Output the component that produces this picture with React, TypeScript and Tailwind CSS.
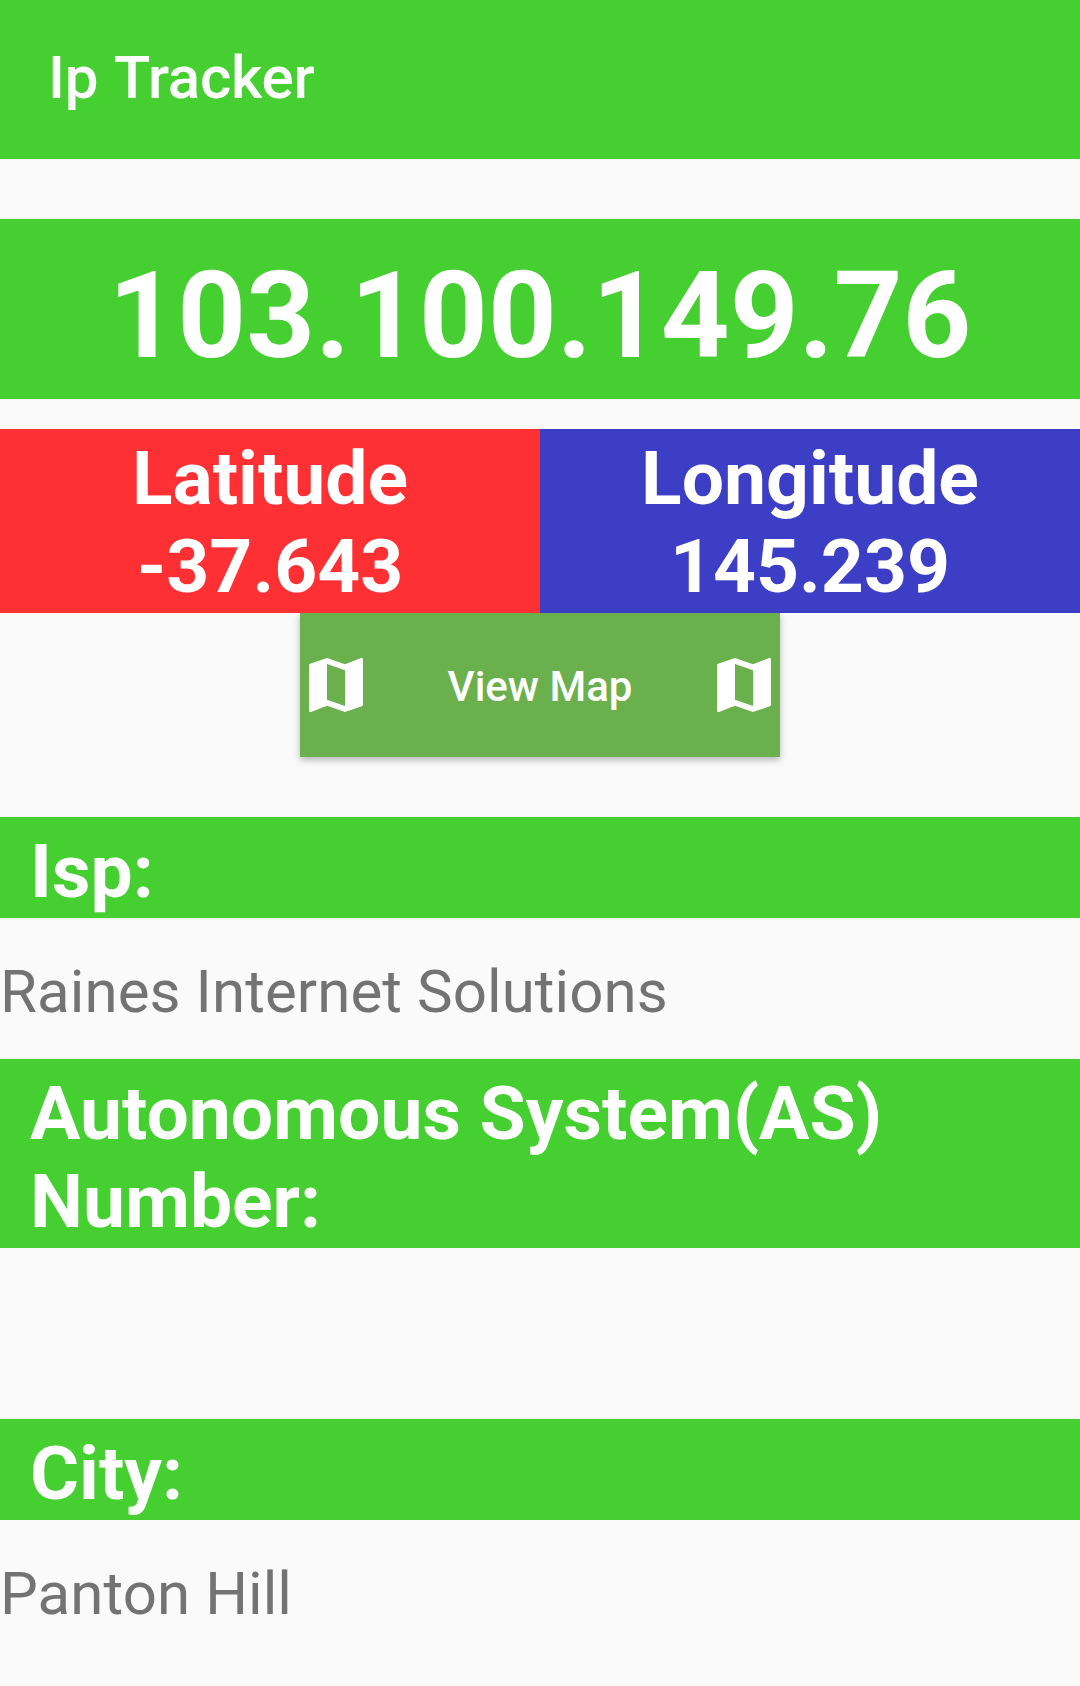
import { MdMap } from "react-icons/md";

type SectionProps = {
  title: string;
  value?: string;
};

function Section({ title, value }: SectionProps) {
  return (
    <section>
      <h2 className="bg-[#45cf30] px-[30px] pt-[10px] pb-[3px] text-[75px] leading-[88px] font-bold text-white">
        {title}
      </h2>
      {value ? (
        <p className="h-[141px] pt-[39px] text-[60px] leading-[70px] tracking-[0.08px] text-[#737373]">
          {value}
        </p>
      ) : (
        <div className="h-[171px]" />
      )}
    </section>
  );
}

export default function App() {
  return (
    <div className="h-[1686px] w-[1080px] overflow-hidden bg-[#fafafa] font-['Roboto',sans-serif]">
      <header className="flex h-[159px] items-center bg-[#45cf30] px-[48px] pb-1 text-[60px] font-medium tracking-[-0.2px] [word-spacing:2px] text-white">
        Ip Tracker
      </header>
      <div className="mt-[60px] flex h-[180px] items-center justify-center bg-[#45cf30] pt-[14px] text-[120px] font-bold tracking-[0.1px] text-white">
        103.100.149.76
      </div>
      <div className="mt-[30px] grid h-[184px] grid-cols-2 text-center text-[75px] leading-[88px] font-bold text-white">
        <div className="bg-[#ff3034] pt-[5px]">
          <div>Latitude</div>
          <div>-37.643</div>
        </div>
        <div className="bg-[#3c3fc6] pt-[5px]">
          <div>Longitude</div>
          <div>145.239</div>
        </div>
      </div>
      <button className="mx-auto flex h-[144px] w-[480px] items-center justify-between bg-[#6ab04c] text-[42px] font-medium text-white shadow-[0_3px_7px_rgba(0,0,0,0.28)]">
        <MdMap size={72} />
        <span className="pt-[3px]">View Map</span>
        <MdMap size={72} />
      </button>
      <main className="mt-[60px]">
        <Section title="Isp:" value="Raines Internet Solutions" />
        <Section title="Autonomous System(AS) Number:" />
        <Section title="City:" value="Panton Hill" />
      </main>
    </div>
  );
}
